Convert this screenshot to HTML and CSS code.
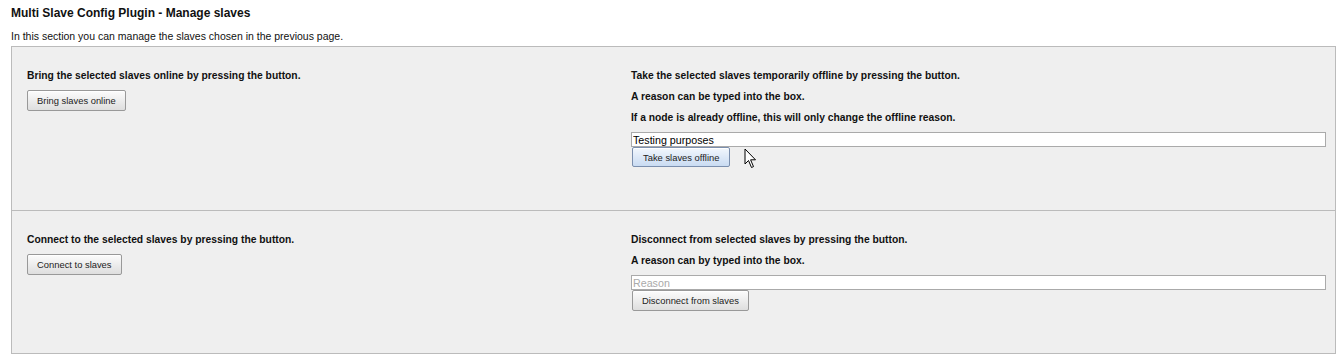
FILE: index.html
```html
<!DOCTYPE html>
<html lang="en">
<head>
    <meta charset="UTF-8" />
    <title>Multi Slave Config Plugin - Manage slaves</title>
    <link rel="stylesheet" href="styles.css">
</head>
<body>

<h1 class="page-title">Multi Slave Config Plugin - Manage slaves</h1>
<p class="page-intro">In this section you can manage the slaves chosen in the previous page.</p>

<div class="manage-box">
    <div class="manage-row">
        <div class="manage-cell">
            <p>Bring the selected slaves online by pressing the button.</p>
            <button class="btn">Bring slaves online</button>
        </div>
        <div class="manage-cell">
            <p>Take the selected slaves temporarily offline by pressing the button.</p>
            <p>A reason can be typed into the box.</p>
            <p>If a node is already offline, this will only change the offline reason.</p>
            <input class="reason" type="text" value="Testing purposes">
            <div class="btn-wrap">
                <button class="btn btn-hover">Take slaves offline</button>
                <svg class="cursor" width="13" height="21" viewBox="0 0 13 21">
                    <path d="M1 1 L1 16 L4.5 12.5 L7.5 19.5 L9.5 18.6 L6.6 11.8 L11.5 11.8 Z" fill="#fff" stroke="#000" stroke-width="1" stroke-linejoin="round"/>
                </svg>
            </div>
        </div>
    </div>
    <div class="manage-row">
        <div class="manage-cell">
            <p>Connect to the selected slaves by pressing the button.</p>
            <button class="btn">Connect to slaves</button>
        </div>
        <div class="manage-cell">
            <p>Disconnect from selected slaves by pressing the button.</p>
            <p>A reason can by typed into the box.</p>
            <input class="reason" type="text" placeholder="Reason">
            <button class="btn">Disconnect from slaves</button>
        </div>
    </div>
</div>

</body>
</html>
```

FILE: styles.css
```css
body {
    margin: 0;
    padding: 0 4px 0 11px;
    font-family: "Liberation Sans", Arial, sans-serif;
    color: #111;
    background: #fff;
}

.page-title {
    font-size: 12px;
    font-weight: bold;
    margin: 6px 0 0;
    line-height: 14px;
}

.page-intro {
    font-size: 10.5px;
    margin: 9px 0 3px;
    line-height: 14px;
}

.manage-box {
    border: 1px solid #bbb;
    background: #efefef;
}

.manage-row {
    display: grid;
    grid-template-columns: 604px 1fr;
    padding: 14px 9px 43px 0;
}
.manage-row + .manage-row {
    border-top: 1px solid #bbb;
    padding-bottom: 42px;
}

.manage-cell {
    padding-left: 15px;
}

.manage-cell p {
    font-size: 10.3px;
    font-weight: bold;
    line-height: 13px;
    margin: 8px 0;
}

.reason {
    display: block;
    box-sizing: border-box;
    width: 100%;
    height: 15px;
    margin: 0;
    padding: 0 1px;
    border: 1px solid #aaa;
    background: #fff;
    font-family: "Liberation Sans", Arial, sans-serif;
    font-size: 10.7px;
    color: #000;
    outline: none;
}
.reason::placeholder {
    color: #aaa;
}

.btn {
    display: block;
    height: 21px;
    margin: 0;
    padding: 0 9px;
    border: 1px solid #999;
    border-radius: 2px;
    background: linear-gradient(#fcfcfc, #dedede);
    font-family: "Liberation Sans", Arial, sans-serif;
    font-size: 9.4px;
    color: #222;
    box-shadow: inset 0 1px 0 #fff;
}
.reason + .btn,
.reason + .btn-wrap {
    margin-left: 1px;
}

.btn-wrap {
    position: relative;
    display: flex;
    align-items: flex-start;
}

.btn-hover {
    height: 20px;
    padding: 0 10px;
    border-color: #7b8fae;
    background: linear-gradient(#f2f7fd, #c9dbf2);
}

.cursor {
    position: absolute;
    left: 112px;
    top: 1px;
}
```
